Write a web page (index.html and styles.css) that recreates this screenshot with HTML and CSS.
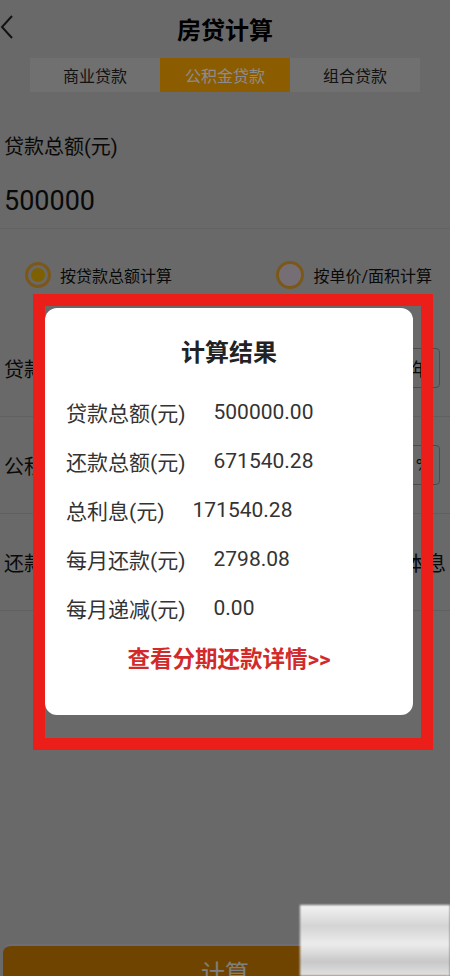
FILE: index.html
```html
<!DOCTYPE html>
<html lang="zh-CN">
<head>
    <meta charset="UTF-8">
    <meta name="viewport" content="width=device-width, initial-scale=1.0">
    <title>房贷计算</title>
    <link rel="stylesheet" href="styles.css">
</head>
<body>
    <div class="page">
        <div class="header">
            <svg class="back" width="14" height="26" viewBox="0 0 14 26">
                <path d="M12 2 L2 13 L12 24" fill="none" stroke="#222" stroke-width="2"/>
            </svg>
            <h1>房贷计算</h1>
        </div>

        <div class="tabs">
            <div class="tab">商业贷款</div>
            <div class="tab active">公积金贷款</div>
            <div class="tab">组合贷款</div>
        </div>

        <div class="amount">
            <div class="amount-label">贷款总额(元)</div>
            <div class="amount-value">500000</div>
        </div>

        <div class="modes">
            <label class="mode">
                <span class="radio checked"></span>
                按贷款总额计算
            </label>
            <label class="mode">
                <span class="radio"></span>
                按单价/面积计算
            </label>
        </div>

        <div class="fields">
            <div class="field">
                <span class="field-label">贷款年限</span>
                <div class="field-box">20年</div>
            </div>
            <div class="field">
                <span class="field-label">公积金利率</span>
                <div class="field-box">3.1%</div>
            </div>
            <div class="field">
                <span class="field-label">还款方式</span>
                <div class="field-text">等额本息</div>
            </div>
        </div>

        <button class="calc-btn">计算</button>
    </div>

    <!-- result dialog -->
    <div class="mask">
        <div class="dialog">
            <h2>计算结果</h2>
            <div class="result-row"><span>贷款总额(元)</span><span>500000.00</span></div>
            <div class="result-row"><span>还款总额(元)</span><span>671540.28</span></div>
            <div class="result-row"><span>总利息(元)</span><span>171540.28</span></div>
            <div class="result-row"><span>每月还款(元)</span><span>2798.08</span></div>
            <div class="result-row"><span>每月递减(元)</span><span>0.00</span></div>
            <a class="detail-link" href="#">查看分期还款详情&gt;&gt;</a>
        </div>
    </div>

    <div class="highlight"></div>
    <div class="stamp"></div>
</body>
</html>
```

FILE: styles.css
```css
html, body {
    margin: 0;
    padding: 0;
    height: 976px;
    overflow: hidden;
}

body {
    font-family: Roboto, "Noto Sans CJK SC", sans-serif;
    background-color: #bfbfbf;
    color: #111;
}

.page {
    display: flex;
    flex-direction: column;
}

.header {
    height: 56px;
    display: flex;
    align-items: center;
    justify-content: center;
    position: relative;
}

.back {
    position: absolute;
    left: 0;
    top: 14px;
}

.header h1 {
    margin: 0;
    font-size: 24px;
    font-weight: bold;
    color: #000;
}

.tabs {
    margin: 2px 30px 0;
    height: 34px;
    display: flex;
    background-color: #cdcdcd;
}

.tab {
    flex: 1;
    display: flex;
    align-items: center;
    justify-content: center;
    font-size: 16px;
    color: #222;
}

.tab.active {
    background-color: #ffa800;
    color: #fff;
}

.amount {
    padding: 41px 0 10px 4px;
    border-bottom: 1px solid #b4b4b4;
}

.amount-label {
    font-size: 20px;
    line-height: 28px;
}

.amount-value {
    margin-top: 23px;
    font-size: 27px;
    line-height: 34px;
}

.modes {
    margin-top: 31px;
    height: 30px;
    padding: 0 18px 0 25px;
    display: flex;
    justify-content: space-between;
    align-items: center;
}

.mode {
    display: flex;
    align-items: center;
    font-size: 16px;
}

.radio {
    width: 20px;
    height: 20px;
    border: 3px solid #e0a030;
    border-radius: 50%;
    margin-right: 9px;
    box-sizing: content-box;
    display: flex;
    align-items: center;
    justify-content: center;
}

.radio.checked::after {
    content: "";
    width: 14px;
    height: 14px;
    border-radius: 50%;
    background-color: #e8b000;
}

.modes .mode:last-child .radio {
    width: 22px;
    height: 22px;
    background-color: #d6cbd6;
}

.fields {
    margin-top: 30px;
}

.field {
    height: 96px;
    border-bottom: 1px solid #b0b0b0;
    display: flex;
    align-items: center;
    justify-content: space-between;
    padding-left: 4px;
}

.field-label {
    font-size: 20px;
}

.field-box {
    width: 130px;
    height: 40px;
    margin-right: 10px;
    border: 1px solid #8a8a8a;
    border-radius: 4px;
    display: flex;
    align-items: center;
    justify-content: flex-end;
    padding-right: 10px;
    font-size: 18px;
    box-sizing: border-box;
}

.field-text {
    font-size: 20px;
    margin-right: 4px;
}

.calc-btn {
    margin: 333px 3px 0;
    height: 52px;
    border: none;
    border-top: 2px solid #c6c6dc;
    border-radius: 8px;
    background-color: #c97c00;
    color: #e8e8e8;
    font-family: inherit;
    font-size: 24px;
}

/* dimmed backdrop holding the dialog */
.mask {
    position: fixed;
    top: 0;
    left: 0;
    right: 0;
    bottom: 0;
    background-color: rgba(0, 0, 0, 0.45);
    padding: 308px 0 0 45px;
}

.dialog {
    width: 368px;
    height: 407px;
    background-color: #fff;
    border-radius: 12px;
    padding: 30px 0 0 21px;
    box-sizing: border-box;
    color: #333;
}

.dialog h2 {
    margin: 0 0 19px -21px;
    text-align: center;
    font-size: 24px;
    line-height: 30px;
    font-weight: bold;
    color: #222;
}

.result-row {
    display: flex;
    gap: 28px;
    height: 49px;
    align-items: center;
    font-size: 21px;
}

.detail-link {
    display: block;
    margin: 12px 0 0 -21px;
    text-align: center;
    font-size: 22.5px;
    line-height: 30px;
    font-weight: bold;
    color: #d22a2a;
    text-decoration: none;
}

/* red marker frame round the dialog */
.highlight {
    position: absolute;
    left: 33px;
    top: 294px;
    width: 376px;
    height: 432px;
    border: 12px solid #ec1e1a;
}

.stamp {
    position: absolute;
    right: 0;
    bottom: 0;
    width: 150px;
    height: 71px;
    background: linear-gradient(180deg, #f4f4f4 0%, #d4d4d4 30%, #ececec 55%, #c8c8c8 80%, #e2e2e2 100%);
    filter: blur(1px);
}
```
